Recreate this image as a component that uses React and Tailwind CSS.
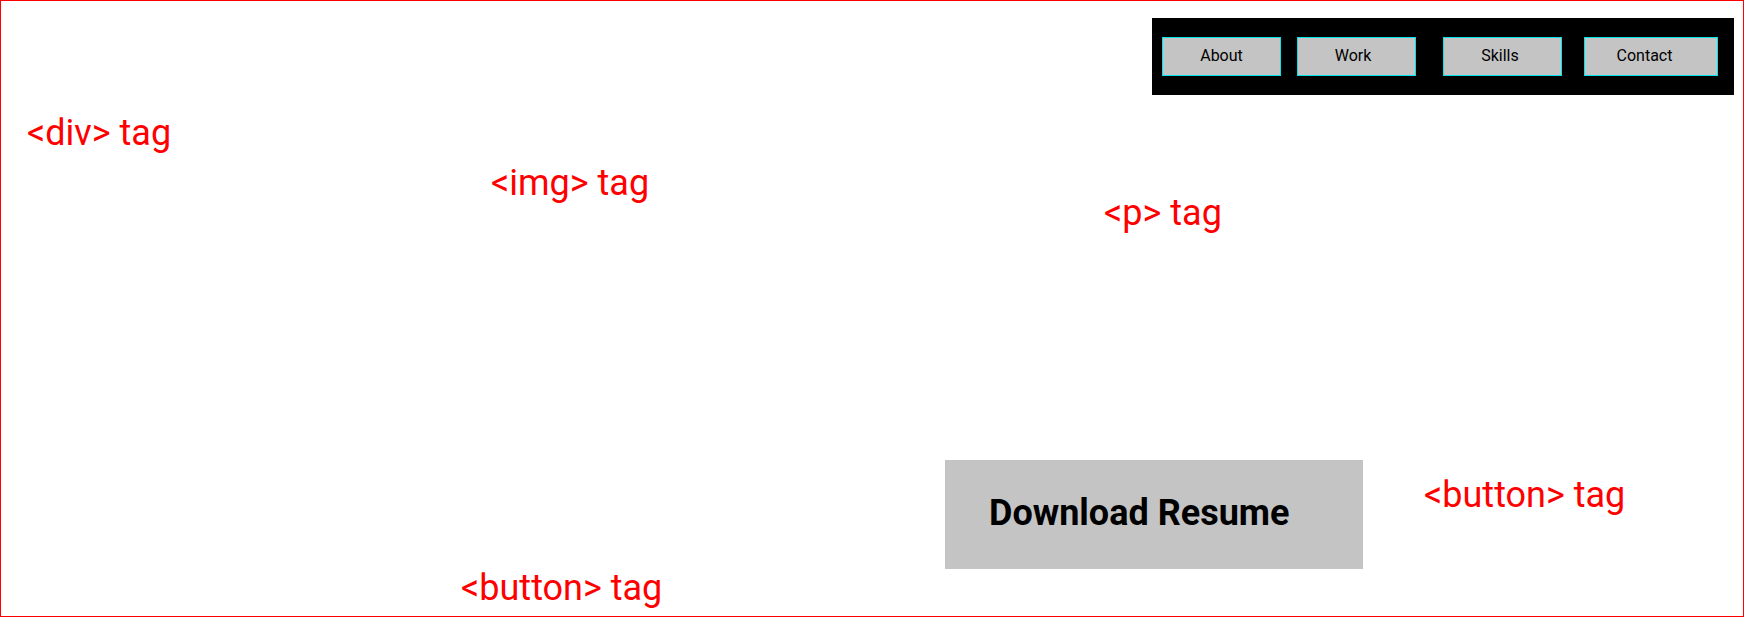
const navItems = [
  { label: 'About', className: 'w-[119px]' },
  { label: 'Work', className: 'ml-[16px] w-[119px] pr-[7px]' },
  { label: 'Skills', className: 'ml-[27px] w-[119px] pr-[5px]' },
  { label: 'Contact', className: 'ml-[22px] w-[134px] pr-[13px]' },
];

// annotation labels sit on the wireframe canvas
const notes = [
  { text: '<div> tag', className: 'left-[26px] top-[114px]' },
  { text: '<img> tag', className: 'left-[490px] top-[164px]' },
  { text: '<p> tag', className: 'left-[1103px] top-[194px]' },
  { text: '<button> tag', className: 'left-[1423px] top-[476px]' },
  { text: '<button> tag', className: 'left-[460px] top-[569px]' },
];

function App() {
  return (
    <div className="relative h-[617px] w-[1744px] overflow-hidden border border-[#ff0000] bg-white font-['Roboto',sans-serif]">
      <nav className="ml-[1151px] mt-[17px] flex h-[77px] w-[582px] items-center bg-black pl-[10px]">
        {navItems.map((item) => (
          <button
            key={item.label}
            type="button"
            className={`h-[39px] border border-[#00e5ee] bg-[#c4c4c4] pb-[2px] text-[16px] text-black ${item.className}`}
          >
            {item.label}
          </button>
        ))}
      </nav>

      <button
        type="button"
        className="ml-[944px] mt-[365px] block h-[109px] w-[418px] bg-[#c4c4c4] pb-[4px] pl-[44px] text-left text-[36px] font-bold text-black"
      >
        Download Resume
      </button>

      {notes.map((note, i) => (
        <span
          key={i}
          className={`absolute whitespace-nowrap text-[36px] leading-none text-[#ff0000] ${note.className}`}
        >
          {note.text}
        </span>
      ))}
    </div>
  );
}

export default App;
